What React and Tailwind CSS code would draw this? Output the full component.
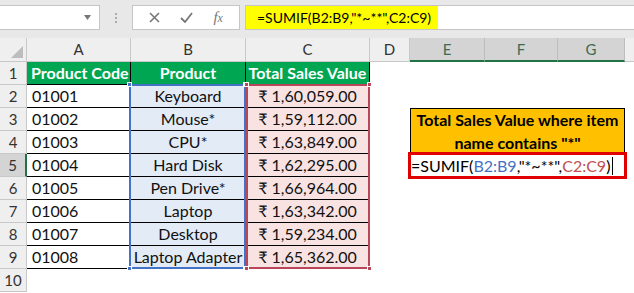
import React from 'react';

const data = [
  ['01001', 'Keyboard', '₹ 1,60,059.00'],
  ['01002', 'Mouse*', '₹ 1,59,112.00'],
  ['01003', 'CPU*', '₹ 1,63,849.00'],
  ['01004', 'Hard Disk', '₹ 1,62,295.00'],
  ['01005', 'Pen Drive*', '₹ 1,66,964.00'],
  ['01006', 'Laptop', '₹ 1,63,342.00'],
  ['01007', 'Desktop', '₹ 1,59,234.00'],
  ['01008', 'Laptop Adapter', '₹ 1,65,362.00'],
];

const gridCols = 'grid grid-cols-[27px_104px_115px_124px_40px_75px_73px_67px_1fr] grid-rows-[24px_repeat(10,23px)]';

const Toolbar = () => (
  <div className="h-[38px] bg-[#e8e8e8] flex items-start pt-[5px] gap-0">
    {/* name box */}
    <div className="w-[100px] h-[25px] bg-white border border-[#c6c6c6] border-l-0 flex items-center justify-end pr-[8px]">
      <svg width="7" height="5" viewBox="0 0 7 5"><path d="M0 0h7L3.5 5z" fill="#777" /></svg>
    </div>
    <div className="w-[32px] h-[25px] flex flex-col items-center justify-center gap-[2px]">
      <span className="w-[2px] h-[2px] bg-[#aaa]" />
      <span className="w-[2px] h-[2px] bg-[#aaa]" />
      <span className="w-[2px] h-[2px] bg-[#aaa]" />
    </div>
    {/* cancel / enter / fx */}
    <div className="w-[108px] h-[25px] bg-white border border-[#c6c6c6] flex items-center justify-around px-[6px]">
      <svg width="11" height="11" viewBox="0 0 11 11"><path d="M1 1l9 9M10 1l-9 9" stroke="#777" strokeWidth="1.6" /></svg>
      <svg width="13" height="11" viewBox="0 0 13 11"><path d="M1 6l4 4 7-9" stroke="#777" strokeWidth="1.8" fill="none" /></svg>
      <span className="text-[#777] italic text-[15px] leading-none font-['Liberation_Serif',serif]">f<span className="text-[12px]">x</span></span>
    </div>
    {/* formula */}
    <div className="ml-[5px] flex-1 h-[25px] bg-white border border-[#c6c6c6] border-r-0 flex">
      <div className="w-[192px] h-full bg-[#ffff00] flex items-center pl-[11px] text-[14px] text-black font-['Lato',sans-serif] whitespace-nowrap">
        =SUMIF(B2:B9,"*~**",C2:C9)
      </div>
    </div>
  </div>
);

const ColHeader = ({ label, selected }) => (
  <div
    className={
      selected
        ? 'bg-[#d4d4d4] border-r border-[#bdbdbd] border-b-2 border-b-[#217346] flex items-center justify-center text-[#3d6b52] text-[15px]'
        : 'bg-[#efefef] border-r border-[#c8c8c8] border-b border-b-[#c8c8c8] flex items-center justify-center text-[#333] text-[15px]'
    }
  >
    {label}
  </div>
);

const RowHeader = ({ n, selected }) => (
  <div
    className={
      selected
        ? 'bg-[#d4d4d4] border-r-2 border-r-[#217346] border-b border-[#c8c8c8] flex items-center justify-center text-[#333] text-[15px]'
        : 'bg-[#efefef] border-r border-[#c8c8c8] border-b border-[#c8c8c8] flex items-center justify-center text-[#333] text-[15px]'
    }
  >
    {n}
  </div>
);

const Corner = ({ className }) => (
  <span className={'absolute w-[5px] h-[5px] border border-white ' + className} />
);

export default function App() {
  return (
    <div className="w-[634px] h-[293px] overflow-hidden bg-white font-['Lato',sans-serif]">
      <Toolbar />
      <div className="relative">
        <div className={gridCols}>
          {/* column header row */}
          <div className="bg-[#efefef] border-r border-b border-[#c8c8c8] relative">
            <svg className="absolute right-[3px] bottom-[3px]" width="12" height="12" viewBox="0 0 12 12"><path d="M12 0v12H0z" fill="#bdbdbd" /></svg>
          </div>
          <ColHeader label="A" />
          <ColHeader label="B" />
          <ColHeader label="C" />
          <ColHeader label="D" />
          <ColHeader label="E" selected />
          <ColHeader label="F" selected />
          <ColHeader label="G" selected />
          <div className="bg-[#efefef] border-b border-[#c8c8c8]" />

          {/* row 1: headers */}
          <RowHeader n={1} />
          <div className="bg-[#00a651] border-r border-b border-black text-white font-bold text-[16px] flex items-center pl-[4px] whitespace-nowrap">Product Code</div>
          <div className="bg-[#00a651] border-r border-b border-black text-white font-bold text-[16px] flex items-center justify-center whitespace-nowrap">Product</div>
          <div className="bg-[#00a651] border-r border-b border-black text-white font-bold text-[16px] flex items-center justify-center whitespace-nowrap">Total Sales Value</div>
          <div /><div /><div /><div /><div />

          {data.map((r, i) => {
            const n = i + 2;
            return (
              <React.Fragment key={n}>
                <RowHeader n={n} selected={n === 5} />
                <div className="border-r border-b border-black text-[16px] text-[#111] flex items-center pl-[5px]">{r[0]}</div>
                <div className="bg-[#e3ebf6] border-r border-b border-black text-[16px] text-[#111] flex items-center justify-center whitespace-nowrap">{r[1]}</div>
                <div className="bg-[#f9e3e2] border-r border-b border-black text-[16px] text-[#111] flex items-center justify-center whitespace-nowrap">{r[2]}</div>
                <div />
                {n === 3 && (
                  <div className="col-span-3 row-span-2 bg-[#ffc000] border border-black flex items-center justify-center text-center font-bold text-[16px] leading-[23px] text-black">
                    Total Sales Value where item<br />name contains "*"
                  </div>
                )}
                {n === 5 && (
                  <div className="col-span-3 -mx-[2px] -my-[2px] border-[3px] border-[#e00000] flex items-center pl-0 text-[16px] text-black whitespace-nowrap">
                    =SUMIF(<span className="text-[#4472c4]">B2:B9</span>,"*~**",<span className="text-[#c0504d]">C2:C9</span>)
                    <span className="ml-[2px] w-px h-[18px] bg-black" />
                  </div>
                )}
                {n !== 3 && n !== 4 && n !== 5 && (
                  <>
                    <div /><div /><div />
                  </>
                )}
                <div />
              </React.Fragment>
            );
          })}

          {/* row 10 */}
          <RowHeader n={10} />
          <div /><div /><div /><div /><div /><div /><div /><div />
        </div>

        {/* reference range outlines over the sheet */}
        <div className={gridCols + ' absolute inset-0 pointer-events-none'}>
          <div className="col-start-3 row-start-3 row-span-8 -ml-[2px] -mt-px border-2 border-[#4472c4] relative">
            <Corner className="bg-[#4472c4] -left-[4px] -top-[4px]" />
            <Corner className="bg-[#4472c4] -right-[4px] -top-[4px]" />
            <Corner className="bg-[#4472c4] -left-[4px] -bottom-[4px]" />
            <Corner className="bg-[#4472c4] -right-[4px] -bottom-[4px]" />
          </div>
          <div className="col-start-4 row-start-3 row-span-8 -mt-px border-2 border-[#b84558] relative">
            <Corner className="bg-[#b84558] -left-[4px] -top-[4px]" />
            <Corner className="bg-[#b84558] -right-[4px] -top-[4px]" />
            <Corner className="bg-[#b84558] -left-[4px] -bottom-[4px]" />
            <Corner className="bg-[#b84558] -right-[4px] -bottom-[4px]" />
          </div>
        </div>
      </div>
    </div>
  );
}
